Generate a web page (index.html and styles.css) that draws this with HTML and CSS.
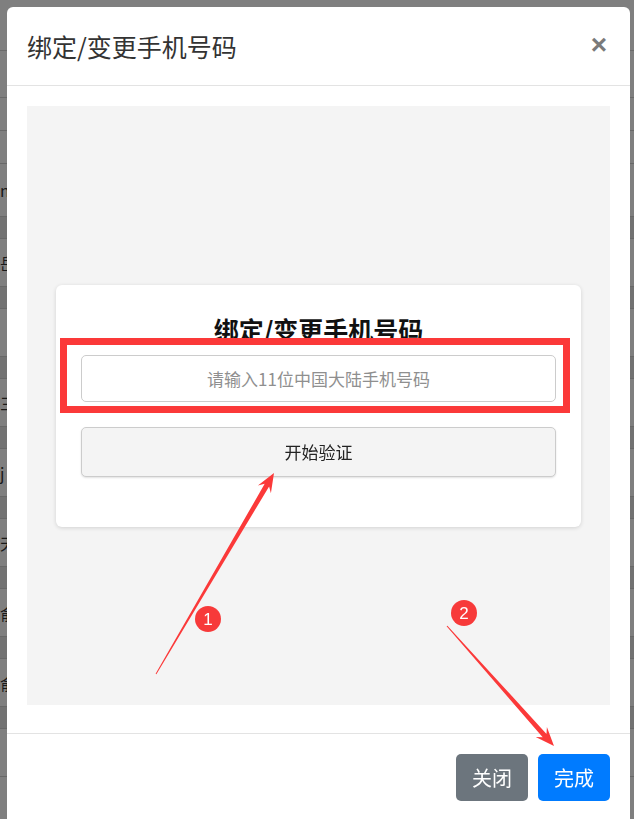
FILE: index.html
```html
<!DOCTYPE html>
<html lang="zh-CN">
<head>
<meta charset="utf-8">
<title>绑定/变更手机号码</title>
<link rel="stylesheet" href="styles.css">
</head>
<body>
<div class="page">
  <div class="page-top"></div>
  <div class="page-head"></div>
  <div class="row-thin"></div>
  <div class="row-thin"></div>
  <div class="row-main"><span class="frag">n</span></div>
  <div class="row"><span class="cell-sub"></span><span class="cell-main"><span class="frag">岳</span></span></div>
  <div class="row"><span class="cell-sub"></span><span class="cell-main"></span></div>
  <div class="row"><span class="cell-sub"></span><span class="cell-main"><span class="frag">三</span></span></div>
  <div class="row"><span class="cell-sub"></span><span class="cell-main"><span class="frag">j</span></span></div>
  <div class="row"><span class="cell-sub"></span><span class="cell-main"><span class="frag">天</span></span></div>
  <div class="row"><span class="cell-sub"></span><span class="cell-main"><span class="frag">俞</span></span></div>
  <div class="row"><span class="cell-sub"></span><span class="cell-main"><span class="frag">俞</span></span></div>
  <div class="row"><span class="cell-sub"></span><span class="cell-main"></span></div>
</div>
<div class="backdrop"></div>
<div class="modal-wrap">
  <div class="modal">
    <div class="modal-header">
      <h5 class="modal-title">绑定/变更手机号码</h5>
      <button class="close" type="button">×</button>
    </div>
    <div class="modal-body">
      <div class="stage">
        <div class="card">
          <h3 class="card-title">绑定/变更手机号码</h3>
          <input class="phone" type="text" placeholder="请输入11位中国大陆手机号码">
          <button class="verify" type="button">开始验证</button>
        </div>
      </div>
    </div>
    <div class="modal-footer">
      <button class="btn btn-secondary" type="button">关闭</button>
      <button class="btn btn-primary" type="button">完成</button>
    </div>
  </div>
</div>
<svg class="annot" width="634" height="819" viewBox="0 0 634 819">
  <rect x="63.5" y="341.5" width="503" height="68" fill="none" stroke="#fb3939" stroke-width="7"/>
  <polygon fill="#fb3939" points="156.4,674.3 269.1,486.4 270.9,493.2 274,473 257.9,485.6 264.7,483.8 155.6,673.7"/>
  <polygon fill="#fb3939" points="446.6,626.3 542.7,737.3 535.7,736.9 554,746 546.9,726.9 546.5,733.9 447.4,625.7"/>
  <circle cx="208" cy="619" r="13" fill="#f73a3a"/>
  <text x="208" y="625" class="num">1</text>
  <circle cx="464" cy="613" r="13" fill="#f73a3a"/>
  <text x="464" y="619" class="num">2</text>
</svg>
</body>
</html>
```
FILE: styles.css
```css
html, body {
  margin: 0;
  padding: 0;
}
body {
  width: 634px;
  height: 819px;
  overflow: hidden;
  background: #ffffff;
  font-family: "Noto Sans CJK SC", "Noto Sans", sans-serif;
  color: #333;
}

/* underlying page (mostly hidden by the modal) */
.page {
  width: 634px;
}
.page-top {
  height: 50px;
  border-bottom: 1px solid #d4d4d4;
}
.page-head {
  height: 46px;
  border-bottom: 1px solid #d4d4d4;
}
.row-thin {
  height: 32px;
  border-bottom: 1px solid #d0d0d0;
}
.row-main {
  height: 52px;
  border-bottom: 1px solid #d0d0d0;
  display: flex;
  align-items: center;
}
.row {
  display: flex;
  flex-direction: column;
}
.cell-sub {
  display: block;
  height: 21px;
  border-bottom: 1px solid #d0d0d0;
  background: #e4e4e4;
}
.cell-main {
  height: 47px;
  border-bottom: 1px solid #d0d0d0;
  display: flex;
  align-items: center;
}
.frag {
  display: block;
  margin-left: 0;
  font-size: 16px;
  line-height: 20px;
  color: #333;
}

.backdrop {
  position: fixed;
  inset: 0;
  background: rgba(0, 0, 0, 0.5);
}

.modal-wrap {
  position: fixed;
  inset: 0;
  padding: 7px 0 0 7px;
}
.modal {
  width: 623px;
  height: 840px;
  background: #fff;
  border-radius: 6px;
  display: flex;
  flex-direction: column;
}

.modal-header {
  height: 79px;
  box-sizing: border-box;
  padding: 0 20px;
  display: flex;
  align-items: center;
  justify-content: space-between;
  border-bottom: 1px solid #e3e3e3;
}
.modal-title {
  margin: 0;
  font-size: 25px;
  font-weight: 400;
  line-height: 34px;
  color: #333;
}
.close {
  width: 22px;
  height: 30px;
  padding: 0;
  margin-top: -2px;
  border: 0;
  background: transparent;
  font-family: "Liberation Sans", sans-serif;
  font-size: 28px;
  font-weight: 700;
  line-height: 30px;
  color: #7a7a7a;
  text-align: center;
}

.modal-body {
  padding: 20px 20px 28px;
}
.stage {
  height: 599px;
  background: #f4f4f4;
  display: flex;
  align-items: center;
  justify-content: center;
}
.card {
  width: 525px;
  box-sizing: border-box;
  padding: 27px 25px 50px;
  background: #fff;
  border-radius: 6px;
  box-shadow: 0 1px 4px rgba(0, 0, 0, 0.14);
  display: flex;
  flex-direction: column;
}
.card-title {
  margin: 0 0 9px;
  font-size: 25px;
  font-weight: 700;
  line-height: 34px;
  text-align: center;
  color: #111;
}
.phone {
  height: 47px;
  box-sizing: border-box;
  margin: 0 0 25px;
  padding: 0 12px;
  border: 1px solid #cccccc;
  border-radius: 5px;
  font-family: "Noto Sans CJK SC", sans-serif;
  font-size: 17px;
  text-align: center;
  color: #333;
  background: #fff;
  outline: none;
}
.phone::placeholder {
  color: #8f8f8f;
}
.verify {
  height: 50px;
  box-sizing: border-box;
  border: 1px solid #cccccc;
  border-radius: 5px;
  background: #f4f4f4;
  box-shadow: 0 1px 2px rgba(0, 0, 0, 0.12);
  font-family: "Noto Sans CJK SC", sans-serif;
  font-size: 17px;
  color: #222;
  padding: 0;
}

.modal-footer {
  border-top: 1px solid #e3e3e3;
  padding: 20px 20px;
  display: flex;
  justify-content: flex-end;
  gap: 10px;
}
.btn {
  width: 72px;
  height: 47px;
  padding: 0;
  border: 0;
  border-radius: 5px;
  font-family: "Noto Sans CJK SC", sans-serif;
  font-size: 20px;
  color: #fff;
}
.btn-secondary {
  background: #6c757d;
}
.btn-primary {
  background: #007bff;
}

.annot {
  position: absolute;
  left: 0;
  top: 0;
  pointer-events: none;
}
.num {
  font-family: "Liberation Sans", sans-serif;
  font-size: 17px;
  fill: #fff;
  text-anchor: middle;
}
```
